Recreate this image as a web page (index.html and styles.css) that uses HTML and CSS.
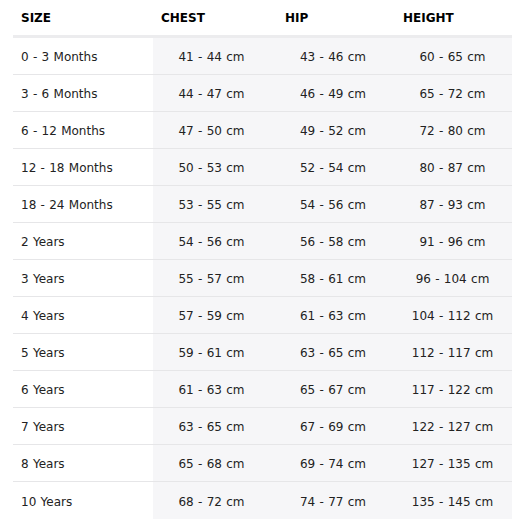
FILE: index.html
```html
<!DOCTYPE html>
<html>
<head>
<meta charset="utf-8">
<link rel="stylesheet" href="styles.css">
</head>
<body>
<div class="chart">
  <div class="row head">
    <div class="cell">SIZE</div>
    <div class="cell">CHEST</div>
    <div class="cell">HIP</div>
    <div class="cell">HEIGHT</div>
  </div>
  <div class="row"><div class="cell">0 - 3 Months</div><div class="cell">41 - 44 cm</div><div class="cell">43 - 46 cm</div><div class="cell">60 - 65 cm</div></div>
  <div class="row"><div class="cell">3 - 6 Months</div><div class="cell">44 - 47 cm</div><div class="cell">46 - 49 cm</div><div class="cell">65 - 72 cm</div></div>
  <div class="row"><div class="cell">6 - 12 Months</div><div class="cell">47 - 50 cm</div><div class="cell">49 - 52 cm</div><div class="cell">72 - 80 cm</div></div>
  <div class="row"><div class="cell">12 - 18 Months</div><div class="cell">50 - 53 cm</div><div class="cell">52 - 54 cm</div><div class="cell">80 - 87 cm</div></div>
  <div class="row"><div class="cell">18 - 24 Months</div><div class="cell">53 - 55 cm</div><div class="cell">54 - 56 cm</div><div class="cell">87 - 93 cm</div></div>
  <div class="row"><div class="cell">2 Years</div><div class="cell">54 - 56 cm</div><div class="cell">56 - 58 cm</div><div class="cell">91 - 96 cm</div></div>
  <div class="row"><div class="cell">3 Years</div><div class="cell">55 - 57 cm</div><div class="cell">58 - 61 cm</div><div class="cell">96 - 104 cm</div></div>
  <div class="row"><div class="cell">4 Years</div><div class="cell">57 - 59 cm</div><div class="cell">61 - 63 cm</div><div class="cell">104 - 112 cm</div></div>
  <div class="row"><div class="cell">5 Years</div><div class="cell">59 - 61 cm</div><div class="cell">63 - 65 cm</div><div class="cell">112 - 117 cm</div></div>
  <div class="row"><div class="cell">6 Years</div><div class="cell">61 - 63 cm</div><div class="cell">65 - 67 cm</div><div class="cell">117 - 122 cm</div></div>
  <div class="row"><div class="cell">7 Years</div><div class="cell">63 - 65 cm</div><div class="cell">67 - 69 cm</div><div class="cell">122 - 127 cm</div></div>
  <div class="row"><div class="cell">8 Years</div><div class="cell">65 - 68 cm</div><div class="cell">69 - 74 cm</div><div class="cell">127 - 135 cm</div></div>
  <div class="row last"><div class="cell">10 Years</div><div class="cell">68 - 72 cm</div><div class="cell">74 - 77 cm</div><div class="cell">135 - 145 cm</div></div>
</div>
</body>
</html>
```

FILE: styles.css
```css
html, body {
  margin: 0;
  padding: 0;
  background: #ffffff;
}

body {
  font-family: "DejaVu Sans", Verdana, sans-serif;
  font-size: 12px;
  word-spacing: 0.5px;
  color: #222222;
}

.chart {
  margin-left: 13px;
  width: 499px;
}

.row {
  display: grid;
  grid-template-columns: 140px 120px 120px 119px;
  height: 36px;
  border-bottom: 1px solid #e6e6e8;
}

.row .cell {
  display: flex;
  align-items: center;
  justify-content: center;
  padding-top: 2px;
  background: #f6f6f8;
}

.row .cell:first-child {
  justify-content: flex-start;
  padding-left: 8px;
  background: #ffffff;
}

.row .cell:nth-child(2) {
  padding-right: 3px;
}

.row.last {
  border-bottom: none;
  height: 37px;
}

.row.head {
  height: 35px;
  border-bottom: 3px solid #ececee;
  font-weight: bold;
  word-spacing: 0;
  color: #000000;
}

.row.head .cell {
  justify-content: flex-start;
  background: #ffffff;
  padding-top: 1px;
}

.row.head .cell:nth-child(1) { padding-left: 8px; }
.row.head .cell:nth-child(2) { padding-left: 8px; }
.row.head .cell:nth-child(3) { padding-left: 12px; }
.row.head .cell:nth-child(4) { padding-left: 10px; }
```
